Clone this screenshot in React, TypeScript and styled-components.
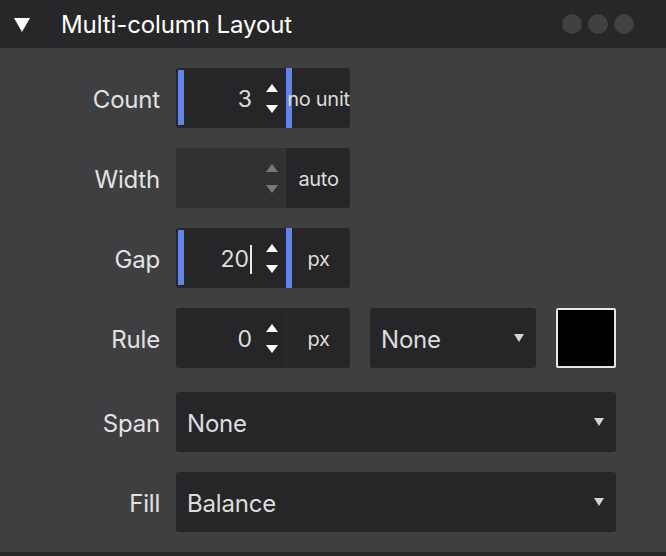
import React from "react";
import styled, { createGlobalStyle } from "styled-components";

const GlobalStyle = createGlobalStyle`
  html, body {
    margin: 0;
    padding: 0;
    background: #27272a;
  }
  body {
    font-family: Inter, "Noto Sans", sans-serif;
  }
`;

const Panel = styled.div`
  width: 666px;
  height: 556px;
  display: flex;
  flex-direction: column;
  background: #3f3f41;
  border-bottom: 4px solid #27272a;
  box-sizing: border-box;
`;

const Header = styled.div`
  height: 48px;
  flex-shrink: 0;
  display: flex;
  align-items: center;
  background: #27272a;
  padding: 0 32px 0 14px;
`;

const Caret = styled.div`
  width: 0;
  height: 0;
  border-left: 8px solid transparent;
  border-right: 8px solid transparent;
  border-top: 14px solid #ffffff;
  margin-right: 31px;
  margin-top: 2px;
`;

const Title = styled.h1`
  flex: 1;
  margin: 0;
  font-size: 24px;
  font-weight: 400;
  color: #ffffff;
  letter-spacing: -0.1px;
`;

const Dots = styled.div`
  display: flex;
  gap: 6px;
`;

const Dot = styled.span`
  width: 20px;
  height: 20px;
  border-radius: 50%;
  background: #414144;
`;

const Body = styled.div`
  flex: 1;
  display: flex;
  flex-direction: column;
  padding-top: 20px;
`;

const Row = styled.div<{ $gap?: number }>`
  display: flex;
  align-items: center;
  height: 60px;
  margin-bottom: ${(p) => p.$gap ?? 20}px;
`;

const Label = styled.label`
  width: 160px;
  margin-right: 16px;
  margin-top: 3px;
  text-align: right;
  font-size: 24px;
  letter-spacing: -0.2px;
  color: #e2e2e2;
`;

const Field = styled.div`
  position: relative;
  display: flex;
  width: 174px;
  height: 60px;
`;

const NumberPart = styled.div<{ $disabled?: boolean }>`
  width: 110px;
  display: flex;
  align-items: center;
  justify-content: flex-end;
  border-radius: 3px 0 0 3px;
  background: ${(p) => (p.$disabled ? "#313133" : "#262628")};
`;

const Value = styled.span`
  font-size: 23px;
  color: #dcdcdc;
  display: flex;
  align-items: center;
  margin-top: 2px;
`;

const Cursor = styled.span`
  display: inline-block;
  width: 2px;
  height: 29px;
  margin-left: 1px;
  background: #e8e8e8;
`;

const Spinner = styled.div<{ $disabled?: boolean }>`
  width: 28px;
  margin-left: 6px;
  display: flex;
  flex-direction: column;
  align-items: center;
  gap: 13px;
  color: ${(p) => (p.$disabled ? "#7a7a7c" : "#ffffff")};
`;

const Arrow = styled.span<{ $up?: boolean }>`
  width: 0;
  height: 0;
  border-left: 6px solid transparent;
  border-right: 6px solid transparent;
  ${(p) =>
    p.$up
      ? "border-bottom: 8px solid currentColor;"
      : "border-top: 8px solid currentColor;"}
`;

const Unit = styled.div`
  width: 64px;
  display: flex;
  align-items: center;
  justify-content: center;
  background: #262628;
  border-radius: 0 3px 3px 0;
  font-size: 20px;
  letter-spacing: -0.3px;
  color: #dcdcdc;
  white-space: nowrap;
  border-left: 1px solid #2c2c2e;
  box-sizing: border-box;
`;

const UnitText = styled.span`
  position: relative;
  z-index: 2;
  margin-top: 2px;
`;

const FocusBar = styled.span<{ $side: "left" | "right" }>`
  position: absolute;
  z-index: 1;
  width: 6px;
  background: #6185ec;
  ${(p) =>
    p.$side === "left"
      ? "left: 2px; top: 2px; bottom: 3px;"
      : "left: 110px; top: 0; bottom: 0;"}
`;

const Select = styled.div<{ $width: number }>`
  width: ${(p) => p.$width}px;
  height: 60px;
  box-sizing: border-box;
  display: flex;
  align-items: center;
  justify-content: space-between;
  padding: 2px 12px 0 11px;
  background: #262628;
  border-radius: 3px;
  font-size: 24px;
  letter-spacing: -0.2px;
  color: #dcdcdc;
`;

const SelectArrow = styled.span`
  width: 0;
  height: 0;
  border-left: 5px solid transparent;
  border-right: 5px solid transparent;
  border-top: 8px solid #d4d4d4;
  margin-top: -2px;
`;

const Swatch = styled.div`
  width: 60px;
  height: 60px;
  box-sizing: border-box;
  margin-left: 20px;
  border: 2px solid #e6e6e6;
  border-radius: 2px;
  background: #000000;
`;

const Spacer = styled.div`
  width: 20px;
`;

type NumberFieldProps = {
  value?: string;
  unit: string;
  focused?: boolean;
  disabled?: boolean;
  caret?: boolean;
};

const NumberField: React.FC<NumberFieldProps> = ({
  value,
  unit,
  focused,
  disabled,
  caret,
}) => (
  <Field>
    <NumberPart $disabled={disabled}>
      <Value>
        {value}
        {caret && <Cursor />}
      </Value>
      <Spinner $disabled={disabled}>
        <Arrow $up />
        <Arrow />
      </Spinner>
    </NumberPart>
    <Unit>
      <UnitText>{unit}</UnitText>
    </Unit>
    {focused && <FocusBar $side="left" />}
    {focused && <FocusBar $side="right" />}
  </Field>
);

const App: React.FC = () => {
  return (
    <>
      <GlobalStyle />
      <Panel>
        <Header>
          <Caret />
          <Title>Multi-column Layout</Title>
          <Dots>
            <Dot />
            <Dot />
            <Dot />
          </Dots>
        </Header>
        <Body>
          <Row>
            <Label>Count</Label>
            <NumberField value="3" unit="no unit" focused />
          </Row>
          <Row>
            <Label>Width</Label>
            <NumberField unit="auto" disabled />
          </Row>
          <Row>
            <Label>Gap</Label>
            <NumberField value="20" unit="px" focused caret />
          </Row>
          <Row $gap={24}>
            <Label>Rule</Label>
            <NumberField value="0" unit="px" />
            <Spacer />
            <Select $width={166}>
              None
              <SelectArrow />
            </Select>
            <Swatch />
          </Row>
          <Row>
            <Label>Span</Label>
            <Select $width={440}>
              None
              <SelectArrow />
            </Select>
          </Row>
          <Row>
            <Label>Fill</Label>
            <Select $width={440}>
              Balance
              <SelectArrow />
            </Select>
          </Row>
        </Body>
      </Panel>
    </>
  );
};

export default App;
